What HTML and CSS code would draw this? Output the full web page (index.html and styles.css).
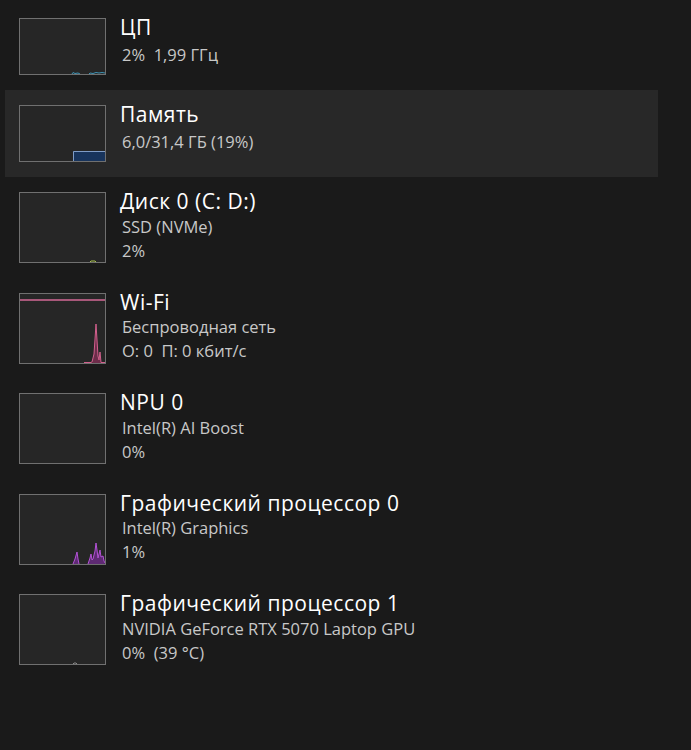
FILE: index.html
```html
<!DOCTYPE html>
<html lang="ru">
<head>
<meta charset="utf-8">
<link rel="stylesheet" href="styles.css">
</head>
<body>
<div class="list">
  <div class="row two">
    <div class="thumb">
      <svg viewBox="0 0 85 55" preserveAspectRatio="none">
        <polyline points="52,55 53,53.5 55,54.5 58,54 60,55" fill="none" stroke="#3f94b5" stroke-width="1"/>
        <polyline points="69,55 70,54 73,54.5 76,53.5 79,54 82,53.5 85,54" fill="none" stroke="#3f94b5" stroke-width="1"/>
      </svg>
    </div>
    <div class="text">
      <div class="title">ЦП</div>
      <div class="sub">2%&nbsp; 1,99 ГГц</div>
    </div>
  </div>

  <div class="row two selected">
    <div class="thumb">
      <svg viewBox="0 0 85 55" preserveAspectRatio="none">
        <rect x="53" y="45" width="32" height="10" fill="#18345c"/>
        <polyline points="53.5,55 53.5,45.5 85,45.5" fill="none" stroke="#7f9cc6" stroke-width="1"/>
      </svg>
    </div>
    <div class="text">
      <div class="title">Память</div>
      <div class="sub">6,0/31,4 ГБ (19%)</div>
    </div>
  </div>

  <div class="row three">
    <div class="thumb">
      <svg viewBox="0 0 85 69" preserveAspectRatio="none">
        <polyline points="70,69 71,68 75,68 76,69" fill="none" stroke="#a9c24c" stroke-width="1"/>
      </svg>
    </div>
    <div class="text">
      <div class="title">Диск 0 (C: D:)</div>
      <div class="sub">SSD (NVMe)</div>
      <div class="sub">2%</div>
    </div>
  </div>

  <div class="row three">
    <div class="thumb">
      <svg viewBox="0 0 85 69" preserveAspectRatio="none">
        <rect x="0" y="5" width="85" height="2" fill="#a8587a"/>
        <polygon points="72,69 74,60 76,30 78,62 79,66 80,58 81,69" fill="#6d2c4a"/>
        <polyline points="64,68.5 71,68.5 72,68 74,60 76,30 78,62 79,66 80,58 81,68.5 85,68.5" fill="none" stroke="#d2608d" stroke-width="1"/>
      </svg>
    </div>
    <div class="text">
      <div class="title">Wi-Fi</div>
      <div class="sub">Беспроводная сеть</div>
      <div class="sub">О: 0&nbsp; П: 0 кбит/с</div>
    </div>
  </div>

  <div class="row three">
    <div class="thumb"></div>
    <div class="text">
      <div class="title">NPU 0</div>
      <div class="sub">Intel(R) AI Boost</div>
      <div class="sub">0%</div>
    </div>
  </div>

  <div class="row three">
    <div class="thumb">
      <svg viewBox="0 0 85 69" preserveAspectRatio="none">
        <polygon points="53,69 55,64 57,57 58,64 59,69" fill="#5e2a73"/>
        <polygon points="68,69 70,63 71,59 72,65 73,64 75,56 76,48 77,55 78,63 80,55 81,62 83,61 84,66 85,69" fill="#5e2a73"/>
        <polyline points="53,69 55,64 57,57 58,64 59,69" fill="none" stroke="#b352d6" stroke-width="1"/>
        <polyline points="68,69 70,63 71,59 72,65 73,64 75,56 76,48 77,55 78,63 80,55 81,62 83,61 84,66 85,68" fill="none" stroke="#b352d6" stroke-width="1"/>
      </svg>
    </div>
    <div class="text">
      <div class="title">Графический процессор 0</div>
      <div class="sub">Intel(R) Graphics</div>
      <div class="sub">1%</div>
    </div>
  </div>

  <div class="row three">
    <div class="thumb">
      <svg viewBox="0 0 85 69" preserveAspectRatio="none">
        <polyline points="53,69 54,68 56,68 57,69" fill="none" stroke="#8a8a8a" stroke-width="1"/>
      </svg>
    </div>
    <div class="text">
      <div class="title">Графический процессор 1</div>
      <div class="sub">NVIDIA GeForce RTX 5070 Laptop GPU</div>
      <div class="sub">0%&nbsp; (39 °C)</div>
    </div>
  </div>
</div>
</body>
</html>
```

FILE: styles.css
```css
html, body {
  margin: 0;
  padding: 0;
  background: #1a1a1a;
}

body {
  font-family: "Open Sans", "Noto Sans", sans-serif;
  color: #ffffff;
  width: 691px;
  height: 750px;
  overflow: hidden;
}

.list {
  padding-top: 3px;
  padding-left: 5px;
  width: 653px;
}

.row {
  display: flex;
  align-items: flex-start;
  padding: 15px 0 15px 14px;
}

.row.three {
  padding-bottom: 14.5px;
}

.row.selected {
  background: #282828;
}

.thumb {
  flex: none;
  width: 85px;
  height: 55px;
  border: 1px solid #707070;
  background: #262626;
}

.row.three .thumb {
  height: 69px;
}

.thumb svg {
  display: block;
  width: 100%;
  height: 100%;
}

.text {
  margin-left: 14px;
}

.title {
  font-size: 21px;
  line-height: 22px;
  letter-spacing: 0.5px;
  margin-top: -2px;
  color: #ffffff;
  white-space: nowrap;
}

.sub {
  font-size: 16.5px;
  line-height: 24px;
  color: #c8c8c8;
  padding-left: 2px;
  white-space: nowrap;
}

.row.two .sub {
  margin-top: 4.5px;
}

.row.three .title + .sub {
  margin-top: 2.5px;
}
```
